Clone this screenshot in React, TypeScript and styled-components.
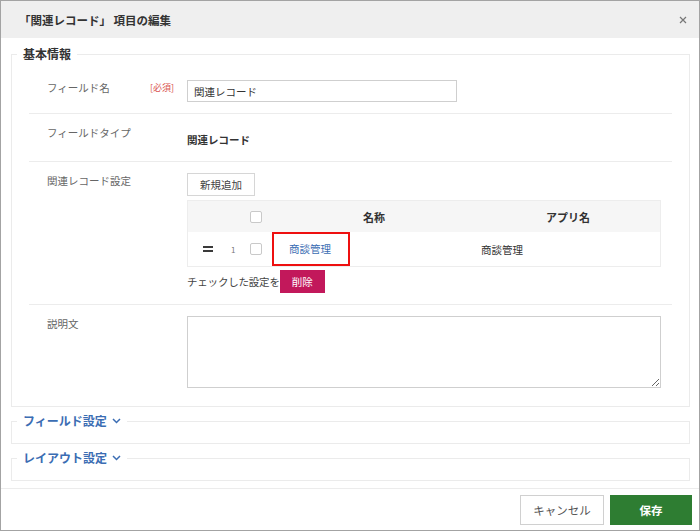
import React from "react"
import styled, { createGlobalStyle } from "styled-components"

const GlobalStyle = createGlobalStyle`
    html, body {
        margin: 0;
        padding: 0;
        background: #fff;
    }
    body {
        font-family: "Noto Sans CJK JP", "Noto Sans", sans-serif;
        color: #333;
    }
`

const Dialog = styled.div`
    width: 700px;
    height: 531px;
    box-sizing: border-box;
    border: 1px solid #a3a3a3;
    display: flex;
    flex-direction: column;
    background: #fff;
`
const Header = styled.div`
    height: 37px;
    background: #efefef;
    display: flex;
    align-items: center;
    justify-content: space-between;
    padding: 0 10px 0 18px;
    flex-shrink: 0;
`
const Title = styled.h2`
    margin: 0;
    font-size: 11.5px;
    font-weight: 700;
    color: #333;
    line-height: 16px;
`
const CloseButton = styled.button`
    border: 0;
    background: none;
    padding: 0;
    width: 12px;
    height: 12px;
    display: flex;
    align-items: center;
    justify-content: center;
    cursor: pointer;
`
const Body = styled.div`
    flex: 1;
    display: flex;
    flex-direction: column;
    gap: 6px;
    padding: 8px 9px 0 10px;
`
const Section = styled.fieldset<{ $collapsed?: boolean }>`
    margin: 0;
    padding: ${p => (p.$collapsed ? "0 0 14px" : "0")};
    border: 1px solid #ebebeb;
    min-width: 0;
`
const SectionBody = styled.div`
    padding: 7px 17px 7px;
`
const Legend = styled.legend<{ $link?: boolean }>`
    margin-left: 5px;
    padding: 0 6px;
    font-size: 12px;
    font-weight: 700;
    line-height: 16px;
    color: ${p => (p.$link ? "#3b6db3" : "#333")};
    display: flex;
    align-items: center;
    gap: 5px;
    cursor: ${p => (p.$link ? "pointer" : "default")};
`
const FieldRow = styled.div<{ $last?: boolean }>`
    display: flex;
    padding: 11px 11px 11px 18px;
    border-bottom: ${p => (p.$last ? "none" : "1px solid #ececec")};
`
const FieldLabel = styled.div`
    width: 140px;
    flex-shrink: 0;
    display: flex;
    align-items: flex-start;
    font-size: 10.5px;
    line-height: 16px;
    color: #666;
`
const LabelText = styled.span`
    width: 103px;
`
const Required = styled.span`
    font-size: 9px;
    color: #d9534f;
    line-height: 16px;
`
const FieldControl = styled.div`
    flex: 1;
    display: flex;
    flex-direction: column;
    align-items: flex-start;
`
const TextInput = styled.input`
    width: 270px;
    height: 22px;
    box-sizing: border-box;
    border: 1px solid #cfcfcf;
    padding: 0 6px;
    font-family: inherit;
    font-size: 10.5px;
    color: #333;
    outline: none;
`
const StaticValue = styled.div`
    padding-top: 5px;
    line-height: 20px;
    font-size: 10.5px;
    font-weight: 700;
    color: #333;
`
const SmallButton = styled.button`
    height: 23px;
    padding: 0 12px;
    box-sizing: border-box;
    border: 1px solid #d6d6d6;
    background: #fff;
    font-family: inherit;
    font-size: 10.5px;
    color: #444;
    margin-bottom: 4px;
    cursor: pointer;
`
const RecordTable = styled.div`
    width: 474px;
    box-sizing: border-box;
    border: 1px solid #ededed;
`
const TableRow = styled.div<{ $head?: boolean }>`
    display: grid;
    grid-template-columns: 55px 29px 204px 1fr;
    height: ${p => (p.$head ? "31px" : "34px")};
    background: ${p => (p.$head ? "#f6f6f6" : "#fff")};
    font-size: ${p => (p.$head ? "11px" : "10.5px")};
    font-weight: ${p => (p.$head ? 700 : 400)};
    color: #333;
`
const Cell = styled.div<{ $align?: "left" | "center"; $pad?: number }>`
    display: flex;
    align-items: center;
    justify-content: ${p => (p.$align === "center" ? "center" : "flex-start")};
    padding-left: ${p => p.$pad ?? 0}px;
`
const Handle = styled.span`
    display: flex;
    flex-direction: column;
    gap: 2px;
    margin-left: 15px;
    & > i {
        display: block;
        width: 10px;
        height: 2px;
        background: #3a3a3a;
    }
`
const RowNo = styled.span`
    margin-left: 18px;
    font-size: 8px;
    color: #777;
`
const Check = styled.span`
    width: 12px;
    height: 12px;
    box-sizing: border-box;
    border: 1px solid #c9c9c9;
    border-radius: 2px;
    background: #fff;
    margin-left: 7px;
`
const NameLink = styled.a`
    align-self: flex-start;
    width: 78px;
    height: 34px;
    box-sizing: border-box;
    border: 2px solid #ee1010;
    padding-left: 15px;
    line-height: 30px;
    color: #3b6db3;
    text-decoration: none;
    font-size: 10.5px;
`
const DeleteLine = styled.div`
    display: flex;
    align-items: center;
    margin-top: 3px;
    font-size: 10.5px;
    letter-spacing: -0.2px;
    color: #444;
`
const DeleteButton = styled.button`
    height: 23px;
    width: 45px;
    border: 0;
    background: #c2185b;
    color: #fff;
    font-family: inherit;
    font-size: 10.5px;
    letter-spacing: 0;
    cursor: pointer;
`
const Memo = styled.textarea`
    width: 474px;
    height: 72px;
    box-sizing: border-box;
    border: 1px solid #cfcfcf;
    font-family: inherit;
    font-size: 10.5px;
    outline: none;
`
const Footer = styled.div`
    border-top: 1px solid #ececec;
    display: flex;
    justify-content: flex-end;
    gap: 6px;
    padding: 6px 7px 5px 0;
    margin-top: 6px;
`
const FooterButton = styled.button<{ $primary?: boolean }>`
    height: 30px;
    width: ${p => (p.$primary ? "82px" : "84px")};
    box-sizing: border-box;
    border: 1px solid ${p => (p.$primary ? "#2e7d32" : "#d0d0d0")};
    background: ${p => (p.$primary ? "#2e7d32" : "#fff")};
    color: ${p => (p.$primary ? "#fff" : "#555")};
    font-family: inherit;
    font-size: 11.5px;
    font-weight: ${p => (p.$primary ? 700 : 400)};
    cursor: pointer;
`

const Chevron = () => (
    <svg width="9" height="6" viewBox="0 0 9 6">
        <polyline points="1,1 4.5,4.5 8,1" fill="none" stroke="#3b6db3" strokeWidth="1.5" />
    </svg>
)

const App = () => {
    return (
        <>
            <GlobalStyle />
            <Dialog>
                <Header>
                    <Title>「関連レコード」 項目の編集</Title>
                    <CloseButton aria-label="閉じる">
                        <svg width="8" height="8" viewBox="0 0 8 8">
                            <path d="M1 1L7 7M7 1L1 7" stroke="#777" strokeWidth="1.2" />
                        </svg>
                    </CloseButton>
                </Header>
                <Body>
                    <Section>
                        <Legend>基本情報</Legend>
                        <SectionBody>
                            <FieldRow>
                                <FieldLabel>
                                    <LabelText>フィールド名</LabelText>
                                    <Required>[必須]</Required>
                                </FieldLabel>
                                <FieldControl>
                                    <TextInput defaultValue="関連レコード" />
                                </FieldControl>
                            </FieldRow>
                            <FieldRow>
                                <FieldLabel>フィールドタイプ</FieldLabel>
                                <FieldControl>
                                    <StaticValue>関連レコード</StaticValue>
                                </FieldControl>
                            </FieldRow>
                            <FieldRow>
                                <FieldLabel>関連レコード設定</FieldLabel>
                                <FieldControl>
                                    <SmallButton>新規追加</SmallButton>
                                    <RecordTable>
                                        <TableRow $head>
                                            <Cell />
                                            <Cell><Check /></Cell>
                                            <Cell $align="center">名称</Cell>
                                            <Cell $align="center">アプリ名</Cell>
                                        </TableRow>
                                        <TableRow>
                                            <Cell>
                                                <Handle><i /><i /></Handle>
                                                <RowNo>1</RowNo>
                                            </Cell>
                                            <Cell><Check /></Cell>
                                            <Cell>
                                                <NameLink href="#">商談管理</NameLink>
                                            </Cell>
                                            <Cell $pad={5}>商談管理</Cell>
                                        </TableRow>
                                    </RecordTable>
                                    <DeleteLine>
                                        チェックした設定を
                                        <DeleteButton>削除</DeleteButton>
                                    </DeleteLine>
                                </FieldControl>
                            </FieldRow>
                            <FieldRow $last>
                                <FieldLabel>説明文</FieldLabel>
                                <FieldControl>
                                    <Memo />
                                </FieldControl>
                            </FieldRow>
                        </SectionBody>
                    </Section>
                    <Section $collapsed>
                        <Legend $link>フィールド設定 <Chevron /></Legend>
                    </Section>
                    <Section $collapsed>
                        <Legend $link>レイアウト設定 <Chevron /></Legend>
                    </Section>
                </Body>
                <Footer>
                    <FooterButton>キャンセル</FooterButton>
                    <FooterButton $primary>保存</FooterButton>
                </Footer>
            </Dialog>
        </>
    )
}

export default App
